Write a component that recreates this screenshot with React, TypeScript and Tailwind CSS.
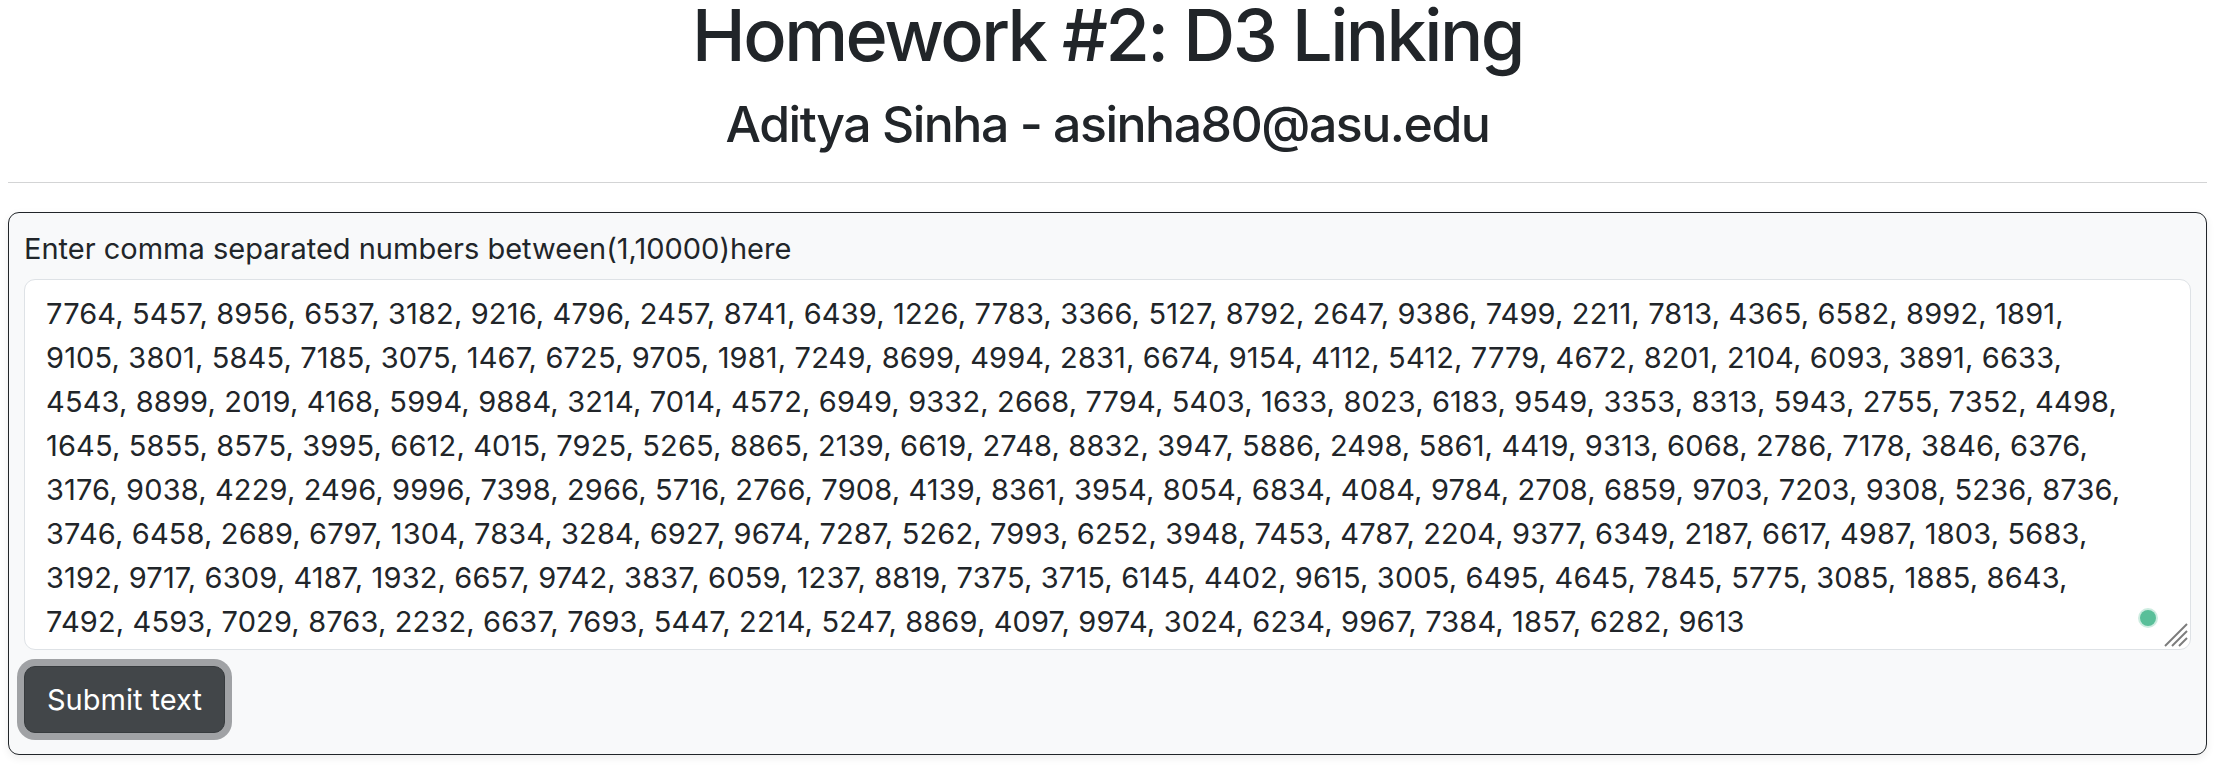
import React from "react";

const lines = [
  "7764, 5457, 8956, 6537, 3182, 9216, 4796, 2457, 8741, 6439, 1226, 7783, 3366, 5127, 8792, 2647, 9386, 7499, 2211, 7813, 4365, 6582, 8992, 1891,",
  "9105, 3801, 5845, 7185, 3075, 1467, 6725, 9705, 1981, 7249, 8699, 4994, 2831, 6674, 9154, 4112, 5412, 7779, 4672, 8201, 2104, 6093, 3891, 6633,",
  "4543, 8899, 2019, 4168, 5994, 9884, 3214, 7014, 4572, 6949, 9332, 2668, 7794, 5403, 1633, 8023, 6183, 9549, 3353, 8313, 5943, 2755, 7352, 4498,",
  "1645, 5855, 8575, 3995, 6612, 4015, 7925, 5265, 8865, 2139, 6619, 2748, 8832, 3947, 5886, 2498, 5861, 4419, 9313, 6068, 2786, 7178, 3846, 6376,",
  "3176, 9038, 4229, 2496, 9996, 7398, 2966, 5716, 2766, 7908, 4139, 8361, 3954, 8054, 6834, 4084, 9784, 2708, 6859, 9703, 7203, 9308, 5236, 8736,",
  "3746, 6458, 2689, 6797, 1304, 7834, 3284, 6927, 9674, 7287, 5262, 7993, 6252, 3948, 7453, 4787, 2204, 9377, 6349, 2187, 6617, 4987, 1803, 5683,",
  "3192, 9717, 6309, 4187, 1932, 6657, 9742, 3837, 6059, 1237, 8819, 7375, 3715, 6145, 4402, 9615, 3005, 6495, 4645, 7845, 5775, 3085, 1885, 8643,",
  "7492, 4593, 7029, 8763, 2232, 6637, 7693, 5447, 2214, 5247, 8869, 4097, 9974, 3024, 6234, 9967, 7384, 1857, 6282, 9613",
];

const App = () => {
  return (
    <div className="min-h-screen overflow-hidden bg-white font-['Inter','Liberation_Sans',sans-serif] text-[#212529]">
      <div className="ml-[8px] mr-[15px]">
        <h1 className="-mt-[8px] text-center text-[72px] font-medium leading-[1.2] tracking-[-0.035em]">
          Homework #2: D3 Linking
        </h1>
        <h3 className="mt-[16px] text-center text-[50px] font-medium leading-[1.2] tracking-[-0.03em]">
          Aditya Sinha - asinha80@asu.edu
        </h3>
        <hr className="mt-[28px] border-t border-[#d3d4d5]" />

        <div className="mt-[29px] rounded-[11px] border border-[#212529] bg-[#f8f9fa] px-[15px] pb-[21px] pt-[14px] shadow-[0_3px_8px_rgba(0,0,0,0.07)]">
          <label className="block text-[29px] leading-[1.5]">
            Enter comma separated numbers between(1,10000)here
          </label>

          <div className="relative mt-[8px] h-[371px] rounded-[11px] border border-[#dee2e6] bg-white px-[21px] pb-[6px] pt-[12px] text-[29px] leading-[44px] tracking-[0.15px]">
            {lines.map((l, i) => (
              <div key={i} className="whitespace-nowrap">
                {l}
              </div>
            ))}
            <span className="absolute bottom-[23px] right-[34px] h-[16px] w-[16px] rounded-full bg-[#59bf99] shadow-[0_0_0_2px_rgba(89,191,153,0.3)]" />
            <svg
              className="absolute bottom-[2px] right-[2px]"
              width="26"
              height="26"
              viewBox="0 0 26 26"
            >
              <line x1="3" y1="25" x2="25" y2="3" stroke="#7c7c7c" strokeWidth="2" />
              <line x1="10" y1="25" x2="25" y2="10" stroke="#7c7c7c" strokeWidth="2" />
              <line x1="17" y1="25" x2="25" y2="17" stroke="#7c7c7c" strokeWidth="2" />
            </svg>
          </div>

          <button
            type="button"
            className="mt-[16px] h-[67px] rounded-[11px] border border-[#373b3e] bg-[#424649] px-[22px] text-[29px] text-white shadow-[0_0_0_7px_#a0a2a5]"
          >
            Submit text
          </button>
        </div>
      </div>
    </div>
  );
};

export default App;
